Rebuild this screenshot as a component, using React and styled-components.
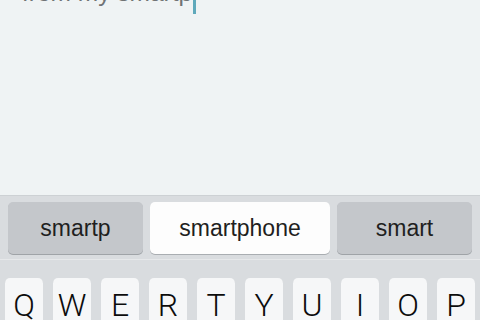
import React from "react";
import styled, { createGlobalStyle } from "styled-components";

const Global = createGlobalStyle`
  html, body { margin: 0; padding: 0; }
  body { width: 480px; height: 320px; overflow: hidden; background: #d9dcdf; }
  * { box-sizing: border-box; }
`;

const Screen = styled.div`
  width: 480px;
  height: 320px;
  overflow: hidden;
  display: flex;
  flex-direction: column;
  font-family: "Liberation Sans", Arial, Helvetica, sans-serif;
`;

const Composer = styled.div`
  height: 195px;
  flex: none;
  background: #eff3f4;
  padding-left: 22px;
  overflow: hidden;
`;

const Message = styled.div`
  margin-top: -22px;
  font-size: 24.5px;
  line-height: 30px;
  color: #707375;
  white-space: nowrap;
`;

const Caret = styled.span`
  display: inline-block;
  width: 3px;
  height: 30px;
  margin-left: 1px;
  vertical-align: -13px;
  background: #5fa9bb;
`;

const Keyboard = styled.div`
  flex: 1;
  background: #d9dcdf;
  border-top: 1px solid #cdd1d4;
  display: flex;
  flex-direction: column;
`;

const SuggestionBar = styled.div`
  display: flex;
  gap: 7px;
  padding: 6px 8px 0;
  height: 64px;
  border-bottom: 1px solid #e6e8ea;
`;

const Pill = styled.div`
  width: ${(p) => p.$w}px;
  height: 52px;
  flex: none;
  border-radius: 5px;
  background: ${(p) => (p.$active ? "#fdfdfd" : "#c4c7cb")};
  box-shadow: 0 1px 0 ${(p) => (p.$active ? "#a9adb1" : "#9fa3a7")};
  display: flex;
  align-items: center;
  justify-content: center;
  font-size: 23px;
  color: #1f1f21;
`;

const KeyRow = styled.div`
  display: flex;
  gap: 10px;
  padding: 18px 5px 0;
`;

const Key = styled.div`
  width: 38px;
  height: 60px;
  flex: none;
  border-radius: 5px;
  background: #f6f7f8;
  box-shadow: 0 1px 0 #9fa3a7;
  display: flex;
  justify-content: center;
  padding-top: 12px;
  font-family: Roboto, "Liberation Sans", Arial, sans-serif;
  font-weight: 300;
  font-size: 32px;
  line-height: 31px;
  color: #0c0c0c;
`;

const letters = ["Q", "W", "E", "R", "T", "Y", "U", "I", "O", "P"];

export default function App() {
  return (
    <Screen>
      <Global />
      <Composer>
        <Message>
          from my smartp<Caret />
        </Message>
      </Composer>
      <Keyboard>
        <SuggestionBar>
          <Pill $w={135}>smartp</Pill>
          <Pill $w={180} $active>smartphone</Pill>
          <Pill $w={135}>smart</Pill>
        </SuggestionBar>
        <KeyRow>
          {letters.map((l) => (
            <Key key={l}>{l}</Key>
          ))}
        </KeyRow>
      </Keyboard>
    </Screen>
  );
}
